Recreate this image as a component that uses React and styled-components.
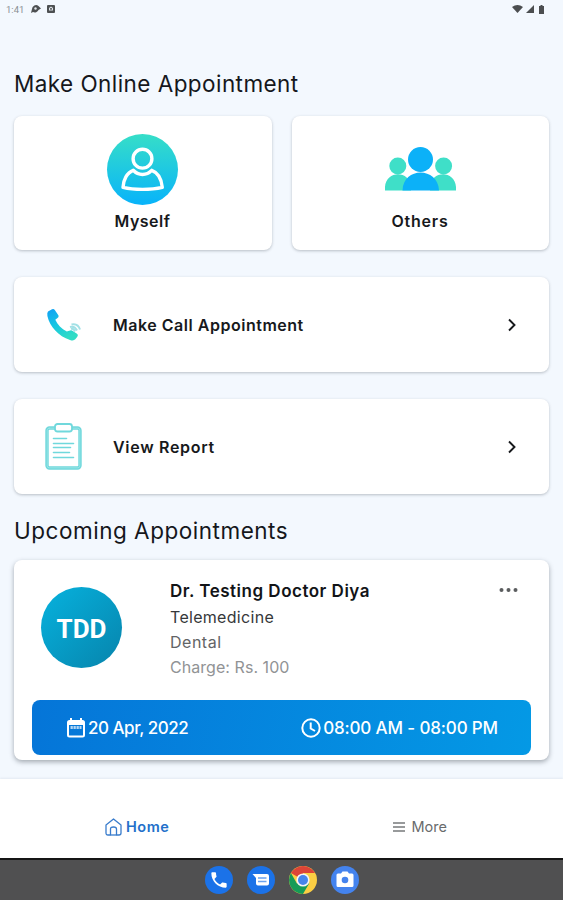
import React from "react";
import styled, { createGlobalStyle } from "styled-components";

const Global = createGlobalStyle`
  * { box-sizing: border-box; }
  body { margin: 0; background: #f3f8fe; }
`;

const Screen = styled.div`
  width: 563px;
  height: 900px;
  display: flex;
  flex-direction: column;
  overflow: hidden;
  background: #f3f8fe;
  font-family: Inter, "Liberation Sans", sans-serif;
  color: #15171c;
`;

const StatusBar = styled.header`
  height: 18px;
  flex: none;
  display: flex;
  align-items: center;
  justify-content: space-between;
  padding: 0 18px 0 6px;
  font: 400 9.5px Roboto, sans-serif;
  color: #8b8f93;
`;

const StatusGroup = styled.div`
  display: flex;
  align-items: center;
  gap: ${(p) => p.$gap}px;
`;

const Main = styled.main`
  height: 761px;
  flex: none;
  padding: 50px 14px 0;
  display: flex;
  flex-direction: column;
`;

const Text = styled.span`
  display: block;
  white-space: nowrap;
  font-size: ${(p) => p.$size}px;
  font-weight: ${(p) => p.$weight || 400};
  line-height: ${(p) => p.$line || 20}px;
  letter-spacing: ${(p) => p.$track || 0}px;
  color: ${(p) => p.$color || "#17191c"};
`;

const Heading = styled.h2`
  margin: 0;
  height: 32px;
  line-height: 32px;
  font-size: 22.5px;
  font-weight: 400;
  white-space: nowrap;
  letter-spacing: ${(p) => p.$track}px;
`;

const Card = styled.section`
  background: #fff;
  border-radius: 8px;
  box-shadow: 0 1px 3px rgba(60, 70, 80, 0.32);
`;

const Pair = styled.div`
  display: grid;
  grid-template-columns: 258px 257px;
  gap: 20px;
  margin: 16px 0 27px;
`;

const ChoiceCard = styled(Card)`
  height: 134px;
  padding: 18px 1px 0 0;
  display: flex;
  flex-direction: column;
  align-items: center;
  gap: 6px;
`;

const ActionCard = styled(Card)`
  height: 95px;
  flex: none;
  margin-bottom: ${(p) => p.$bottom}px;
  padding: 1px 31px 0 31px;
  display: grid;
  grid-template-columns: 68px 1fr 11px;
  align-items: center;
`;

const AppointmentCard = styled(Card)`
  height: 200px;
  flex: none;
  margin-top: 13px;
  padding: 18px 18px 5px;
  display: flex;
  flex-direction: column;
  justify-content: space-between;
  box-shadow: 0 2px 5px rgba(50, 60, 70, 0.42);
`;

const DoctorRow = styled.div`
  display: grid;
  grid-template-columns: 129px 1fr 20px;
  padding: 0 12px 0 9px;
`;

const Avatar = styled.div`
  width: 81px;
  height: 81px;
  margin-top: 9px;
  border-radius: 50%;
  display: flex;
  align-items: center;
  justify-content: center;
  padding-top: 3px;
  font: 700 26px Roboto, sans-serif;
  color: #fff;
  background: linear-gradient(135deg, #06b2de, #0784ac);
`;

const Details = styled.div`
  display: flex;
  flex-direction: column;
`;

const Schedule = styled.div`
  height: 55px;
  border-radius: 8px;
  display: flex;
  align-items: center;
  justify-content: space-between;
  padding: 1px 33px 0 34px;
  background: linear-gradient(100deg, #0575d8, #0499e5);
`;

const Slot = styled.div`
  display: flex;
  align-items: center;
  gap: 2px;
`;

const Nav = styled.nav`
  height: 79px;
  flex: none;
  display: grid;
  grid-template-columns: 1fr 1fr;
  background: #fff;
  box-shadow: 0 -1px 2px rgba(120, 140, 160, 0.13);
  padding-top: 16px;
`;

const NavItem = styled.a`
  display: flex;
  align-items: center;
  height: 63px;
  gap: ${(p) => p.$gap}px;
  padding-left: ${(p) => p.$left}px;
`;

const Dock = styled.footer`
  height: 42px;
  flex: none;
  border-top: 2px solid #151515;
  background: #505051;
  display: flex;
  align-items: center;
  justify-content: center;
  gap: 14px;
`;

const Icon = styled.svg`
  display: block;
  flex: none;
  width: ${(p) => p.$w}px;
  height: ${(p) => p.$h}px;
  overflow: visible;
`;

const PHONE =
  "M6.62 10.79c1.44 2.83 3.76 5.14 6.59 6.59l2.2-2.2c.27-.27.67-.36 1.02-.24 1.12.37 2.33.57 3.57.57.55 0 1 .45 1 1V20c0 .55-.45 1-1 1C10.61 21 3 13.39 3 4c0-.55.45-1 1-1h3.5c.55 0 1 .45 1 1 0 1.25.2 2.45.57 3.57.11.35.03.74-.25 1.02z";

const MyselfIcon = () => (
  <Icon $w={71} $h={71} viewBox="0 0 71 71" fill="none" stroke="#fff" strokeWidth="3.4" strokeLinejoin="round">
    <defs>
      <linearGradient id="me" x1="0" y1="0" x2="0" y2="1">
        <stop stopColor="#36dec8" />
        <stop offset="1" stopColor="#08b3fa" />
      </linearGradient>
    </defs>
    <circle cx="35.5" cy="35.5" r="35.5" fill="url(#me)" stroke="none" />
    <circle cx="35.5" cy="24.7" r="9.4" />
    <path d="M26.2 36.3C20 38.5 16.300 46 16 53.300C27 56 44 56 55.300 53.300C54.500 45 51 38.500 44.700 36.300C39.500 41.800 31.500 41.800 26.200 36.300Z" />
  </Icon>
);

const OthersIcon = () => (
  <Icon $w={71} $h={71} viewBox="0 0 71 71">
    <g fill="#3fdfc8">
      <circle cx="12.800" cy="32" r="8.500" />
      <circle cx="58.600" cy="32" r="8.500" />
      <path d="M0 56.500V53C1 36 25 36 26 53V56.500ZM45 56.500V53C46 36 70 36 71 53V56.500Z" />
    </g>
    <circle cx="35.500" cy="25.500" r="12.500" fill="#0cb1f8" />
    <path d="M17.500 56.500C18 32.500 53 32.500 54 56.500Z" fill="#0cb1f8" />
  </Icon>
);

const CallIcon = () => (
  <Icon $w={36} $h={34} viewBox="-0.5 0.500 36 34">
    <defs>
      <linearGradient id="call" x1="0" y1="0" x2="0.5" y2="1">
        <stop stopColor="#119ff5" />
        <stop offset="0.5" stopColor="#16c5e3" />
        <stop offset="1" stopColor="#30dcc5" />
      </linearGradient>
    </defs>
    <path
      d="M2.500 4L6.500 1.700Q8.200 .8 9.300 2.500L13 8Q13.500 9.500 12 10.500L9.800 12.300C12 17 16 21.500 21.300 24L24.600 22.900Q26 22.400 27.200 23.400L31.500 26.300Q33.200 27.500 31.800 29.200L29.800 31.800Q28 33.700 24.500 32.400C13 29 4.200 19 1.900 8.500Q1.400 5.400 2.500 4Z"
      fill="url(#call)"
    />
    <g fill="none" stroke="#a2e1e6" strokeWidth="2">
      <path d="M24.500 19.500Q29 18 31.500 23" />
      <path d="M26 17Q32.500 15.500 34.500 22" />
      <path d="M25.500 21.500Q28 20.500 29.500 24" />
    </g>
  </Icon>
);

const ReportIcon = () => (
  <Icon $w={38} $h={48} viewBox="0.500 0.500 38 48" fill="none" stroke="#70d8dc" strokeLinecap="round">
    <rect x="2.500" y="5.500" width="33" height="40" rx="2.500" strokeWidth="3.400" />
    <rect x="2.700" y="5.700" width="32.600" height="39.600" rx="2" stroke="#a5e9e9" strokeWidth=".7" />
    <rect x="10.500" y="1.500" width="17" height="7.500" rx="2.500" fill="#fff" strokeWidth="1.800" />
    <path d="M9 16H22M9 21H29M9 25H26M9 30H25M9 35H29" strokeWidth="1.600" />
  </Icon>
);

const Chevron = () => (
  <Icon $w={11} $h={14} viewBox="0 0 11 14" fill="none" stroke="#17191c" strokeWidth="1.9">
    <path d="M2 1.500L7.500 7L2 12.500" />
  </Icon>
);

const NAVY = "#121417";

export default function App() {
  return (
    <Screen>
      <Global />
      <StatusBar>
        <StatusGroup $gap={6}>
          <span>1:41</span>
          <Icon $w={11} $h={10} viewBox="0 0 11 10">
            <path d="M1 9L2 5A4 4 0 0 1 8.500 2L11 4.500L8.500 6A4 4 0 0 1 3 8Z" fill="#4d5052" />
            <circle cx="5.500" cy="4.500" r="1.200" fill="#e4e8ed" />
          </Icon>
          <Icon $w={8} $h={8} viewBox="0 0 8 8">
            <rect width="8" height="8" rx="1" fill="#4d5052" />
            <path d="M2 5.500V3L4 1.500L6 3V5.500Z" fill="#dce1e6" />
            <path d="M3.200 3H4.800V4.700H3.200Z" fill="#4d5052" />
          </Icon>
        </StatusGroup>
        <StatusGroup $gap={3}>
          <Icon $w={11} $h={8} viewBox="0 0 11 8"><path d="M0 2Q5.500-2 11 2L5.500 8Z" fill="#4b4e50" /></Icon>
          <Icon $w={9} $h={8} viewBox="0 0 9 8"><path d="M0 8L8 0V8Z" fill="#4b4e50" /></Icon>
          <Icon $w={7} $h={9} viewBox="0 0 7 9"><path d="M1 1H2.500V0H4.500V1H6V9H1Z" fill="#4b4e50" /></Icon>
        </StatusGroup>
      </StatusBar>

      <Main>
        <Heading $track={0.44}>Make Online Appointment</Heading>
        <Pair>
          <ChoiceCard>
            <MyselfIcon />
            <Text $size={16} $weight={600} $track={0.5}>Myself</Text>
          </ChoiceCard>
          <ChoiceCard>
            <OthersIcon />
            <Text $size={16} $weight={600} $track={0.8}>Others</Text>
          </ChoiceCard>
        </Pair>
        <ActionCard $bottom={27}>
          <CallIcon />
          <Text $size={16} $weight={600} $track={0.52}>Make Call Appointment</Text>
          <Chevron />
        </ActionCard>
        <ActionCard $bottom={21}>
          <ReportIcon />
          <Text $size={16} $weight={600} $track={0.7}>View Report</Text>
          <Chevron />
        </ActionCard>
        <Heading $track={0.52}>Upcoming Appointments</Heading>
        <AppointmentCard>
          <DoctorRow>
            <Avatar>TDD</Avatar>
            <Details>
              <Text $size={17} $weight={600} $line={26} $track={0.5} $color={NAVY}>Dr. Testing Doctor Diya</Text>
              <Text $size={16} $line={26} $track={0.3} $color="#36383a">Telemedicine</Text>
              <Text $size={16} $line={25} $track={0.5} $color="#626466">Dental</Text>
              <Text $size={16} $line={25} $track={0.05} $color="#919395">Charge: Rs. 100</Text>
            </Details>
            <Icon $w={20} $h={24} viewBox="0.500 0 20 24" fill="#5b5d5f">
              <circle cx="3" cy="12" r="2" />
              <circle cx="10" cy="12" r="2" />
              <circle cx="17" cy="12" r="2" />
            </Icon>
          </DoctorRow>
          <Schedule>
            <Slot>
              <Icon $w={20} $h={20} viewBox="0 0 20 20" fill="none" stroke="#fff" strokeWidth="2">
                <rect x="2" y="3" width="16" height="15.500" rx="1.500" />
                <path d="M5 0V4M15 0V4" />
                <path d="M2 5H18" strokeWidth="4" />
                <path d="M4.500 9.500H15.500" strokeWidth="3" strokeDasharray="2.300 .7" opacity=".7" />
              </Icon>
              <Text $size={17} $weight={500} $track={-0.48} $color="#fff">20 Apr, 2022</Text>
            </Slot>
            <Slot>
              <Icon $w={20} $h={20} viewBox="0 0 20 20" fill="none" stroke="#fff" strokeWidth="2">
                <circle cx="10" cy="10" r="8.700" />
                <path d="M9.700 4.500V10.500L14 13" />
              </Icon>
              <Text $size={17} $weight={500} $track={-0.14} $color="#fff">08:00 AM - 08:00 PM</Text>
            </Slot>
          </Schedule>
        </AppointmentCard>
      </Main>

      <Nav>
        <NavItem $left={105} $gap={4}>
          <Icon $w={17} $h={18} viewBox="0 0 17 18" fill="none" stroke="#397ccc" strokeWidth="1.300" strokeLinejoin="round">
            <path d="M1 7L8.500 1L16 7V15Q16 17 14 17H11.500V11Q11.500 9 8.500 9T5.500 11V17H3Q1 17 1 15Z" />
            <path d="M5.500 17H11.500" />
          </Icon>
          <Text $size={14.5} $weight={600} $track={0.55} $color="#2370ca">Home</Text>
        </NavItem>
        <NavItem $left={111} $gap={7}>
          <Icon $w={12} $h={10} viewBox="0 0 12 10" stroke="#77797b" strokeWidth="1.400">
            <path d="M0 1H12M0 5H12M0 9H12" />
          </Icon>
          <Text $size={14.5} $color="#696b6d">More</Text>
        </NavItem>
      </Nav>

      <Dock>
        <Icon $w={28} $h={28} viewBox="0 0 28 28">
          <circle cx="14" cy="14" r="14" fill="#1b72e8" />
          <path d={PHONE} transform="translate(3.800 3.800) scale(.85)" fill="#fff" />
        </Icon>
        <Icon $w={28} $h={28} viewBox="0 0 28 28">
          <circle cx="14" cy="14" r="14" fill="#1b72e8" />
          <path d="M5.500 8H20Q22 8 22 10V17.500Q22 19.500 20 19.500H11Q9 19.500 9 17.500V12Z" fill="#fff" />
          <path d="M11 12H19.500M11 15.500H19.500" stroke="#6ba3ef" strokeWidth="1.400" />
        </Icon>
        <Icon $w={28} $h={28} viewBox="0 0 28 28">
          <circle cx="14" cy="14" r="14" fill="#fbce43" />
          <path d="M14 14L1.900 7A14 14 0 0 1 26.100 7H14Z" fill="#dc4437" />
          <path d="M1.900 7A14 14 0 0 0 14 28L20.100 17.500L14 14L7.900 17.500Z" fill="#159b58" />
          <circle cx="14" cy="14" r="6.600" fill="#f5f5f5" />
          <circle cx="14" cy="14" r="5" fill="#4685ec" />
        </Icon>
        <Icon $w={28} $h={28} viewBox="0 0 28 28">
          <circle cx="14" cy="14" r="14" fill="#4483ee" />
          <path d="M7 7.500H10L11.500 5.500H16.500L18 7.500H21Q22.500 7.500 22.500 9V19.500Q22.500 21 21 21H7Q5.500 21 5.500 19.500V9Q5.500 7.500 7 7.500Z" fill="#fff" />
          <circle cx="14" cy="14" r="3.300" fill="#4483ee" />
        </Icon>
      </Dock>
    </Screen>
  );
}
